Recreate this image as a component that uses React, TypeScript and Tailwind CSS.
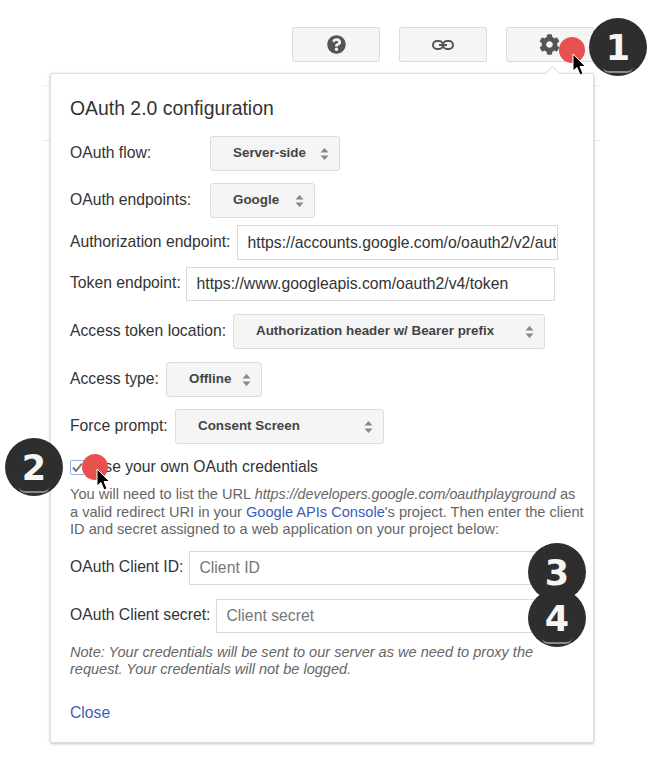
import React from 'react';
import { FaQuestionCircle, FaCog } from 'react-icons/fa';

const Chevrons = () => (
  <svg width="9" height="14" viewBox="0 0 9 14" className="shrink-0">
    <path d="M4.5 1 L8.5 5.5 H0.5 Z M4.5 13 L0.5 8.5 H8.5 Z" fill="#888" />
  </svg>
);

const Select = ({ label, value, labelW, w }: { label: string; value: string; labelW: string; w: string }) => (
  <div className="flex items-center">
    <div className={`${labelW} pb-[2px]`}>{label}</div>
    <div className={`${w} h-[35px] flex items-center justify-between pl-[22px] pr-[10px] bg-[#f5f5f5] border border-[#dcdcdc] rounded-[3px] text-[13.4px] font-bold text-[#444]`}>
      <span>{value}</span>
      <Chevrons />
    </div>
  </div>
);

const Field = ({ label, labelW, w, value, placeholder, h }: { label: string; labelW: string; w: string; value?: string; placeholder?: string; h: string }) => (
  <div className="flex items-center">
    <div className={`${labelW} pb-[2px]`}>{label}</div>
    <input
      readOnly
      defaultValue={value}
      placeholder={placeholder}
      className={`${w} ${h} pl-[9.5px] pr-[1px] bg-white border border-[#d9d9d9] text-[15.75px] text-[#333] placeholder:text-[#777] outline-none`}
    />
  </div>
);

const TopButton = ({ children }: { children: React.ReactNode }) => (
  <div className="w-[88px] h-[35px] flex items-center justify-center bg-[#f5f5f5] border border-[#dcdcdc] rounded-[2px] text-[#555]">
    {children}
  </div>
);

const Badge = ({ n, className }: { n: string; className: string }) => (
  <div className={`absolute w-[58px] h-[58px] rounded-full bg-[#2e2e2e] flex items-center justify-center text-[#f5f5f5] font-['DejaVu_Sans',sans-serif] text-[35px] font-bold overflow-hidden ${className}`}>
    <span className="leading-none mt-[2px]">{n}</span>
    <div className="absolute bottom-[3px] left-[14px] w-[30px] h-[6px] rounded-b-full border-b-2 border-[#8a8a8a]" />
  </div>
);

const Pointer = ({ className }: { className: string }) => (
  <svg width="16" height="24" viewBox="0 0 16 24" className={`absolute ${className}`}>
    <path d="M1 1 L1 18 L5 14.5 L8 22 L11 20.5 L8 13.5 L13.5 13.5 Z" fill="#000" stroke="#fff" strokeWidth="1" />
  </svg>
);

export default function App() {
  return (
    <div className="relative w-[656px] h-[762px] bg-white overflow-hidden text-[#333] text-[15.7px] font-['Liberation_Sans',Arial,sans-serif]">
      {/* toolbar */}
      <div className="flex gap-[19px] pl-[292px] pt-[27px]">
        <TopButton><FaQuestionCircle size={19} /></TopButton>
        <TopButton>
          <svg width="22" height="10" viewBox="0 0 22 10" fill="none" stroke="#555" strokeWidth="2">
            <rect x="1" y="1" width="10" height="8" rx="4" />
            <rect x="11" y="1" width="10" height="8" rx="4" />
            <path d="M7 5 H15" />
          </svg>
        </TopButton>
        <TopButton><FaCog size={21} className="-ml-[2px]" /></TopButton>
      </div>
      <div className="mt-[23px] ml-[42px] w-[558px] border-t border-[#eee]" />
      <div className="mt-[54px] ml-[42px] w-[558px] border-t border-[#eee]" />

      {/* config popover */}
      <div className="absolute left-[50px] top-[73px] w-[544px] h-[670px] bg-white border border-[#dedede] rounded-[2px] shadow-[0_1px_3px_rgba(0,0,0,0.25)] pl-[19px]">
        <div className="absolute -top-[6px] left-[496px] w-[11px] h-[11px] rotate-45 bg-white border-l border-t border-[#dedede]" />
        <div className="mt-[23px] h-[22px] leading-[22px] text-[19.4px] text-[#333]">OAuth 2.0 configuration</div>
        <div className="mt-[17px]"><Select label="OAuth flow:" value="Server-side" labelW="w-[140px]" w="w-[130px]" /></div>
        <div className="mt-[12px]"><Select label="OAuth endpoints:" value="Google" labelW="w-[140px]" w="w-[105px]" /></div>
        <div className="mt-[7px]">
          <Field label="Authorization endpoint:" labelW="w-[167px]" w="w-[321px]" h="h-[35px]" value="https://accounts.google.com/o/oauth2/v2/auth" />
        </div>
        <div className="mt-[7px]">
          <Field label="Token endpoint:" labelW="w-[116px]" w="w-[369px]" h="h-[34px]" value="https://www.googleapis.com/oauth2/v4/token" />
        </div>
        <div className="mt-[13px]"><Select label="Access token location:" value="Authorization header w/ Bearer prefix" labelW="w-[163px]" w="w-[312px]" /></div>
        <div className="mt-[13px]"><Select label="Access type:" value="Offline" labelW="w-[96px]" w="w-[96px]" /></div>
        <div className="mt-[12px]"><Select label="Force prompt:" value="Consent Screen" labelW="w-[105px]" w="w-[209px]" /></div>

        <label className="mt-[13px] h-[20px] flex items-center">
          <span className="w-[15px] h-[15px] border border-[#8fb4ec] rounded-[2px] flex items-center justify-center">
            <svg width="13" height="13" viewBox="0 0 13 13"><path d="M2 6.5 L5 10 L11 2.5" fill="none" stroke="#777" strokeWidth="2" /></svg>
          </span>
          <span className="ml-[8px]">Use your own OAuth credentials</span>
        </label>

        <p className="mt-[9px] text-[14.6px] leading-[17.5px] text-[#666] whitespace-nowrap">
          You will need to list the URL <i className="text-[14.3px]">https://developers.google.com/oauthplayground</i> as
          <br />
          a valid redirect URI in your <span className="text-[#3b5cb8]">Google APIs Console</span>'s project. Then enter the client
          <br />
          ID and secret assigned to a web application on your project below:
        </p>

        <div className="mt-[12.5px]">
          <Field label="OAuth Client ID:" labelW="w-[119px]" w="w-[366px]" h="h-[34px]" placeholder="Client ID" />
        </div>
        <div className="mt-[14px]">
          <Field label="OAuth Client secret:" labelW="w-[146px]" w="w-[339px]" h="h-[34px]" placeholder="Client secret" />
        </div>

        <p className="mt-[10.5px] w-[480px] text-[14.55px] leading-[17px] italic text-[#666]">
          Note: Your credentials will be sent to our server as we need to proxy the request. Your credentials will not be logged.
        </p>
        <div className="mt-[25.5px] h-[20px] leading-[20px] text-[#3b5cb8]">Close</div>
      </div>

      {/* tutorial overlays */}
      <div className="absolute left-[559px] top-[37px] w-[26px] h-[26px] rounded-full bg-[#e8514f]" />
      <Pointer className="left-[572px] top-[53px]" />
      <div className="absolute left-[82px] top-[454px] w-[26px] h-[26px] rounded-full bg-[#e8514f]" />
      <Pointer className="left-[96px] top-[468px]" />
      <Badge n="1" className="left-[589px] top-[18px]" />
      <Badge n="2" className="left-[5px] top-[438px]" />
      <Badge n="3" className="left-[528px] top-[543px]" />
      <Badge n="4" className="left-[528px] top-[589px]" />
    </div>
  );
}
